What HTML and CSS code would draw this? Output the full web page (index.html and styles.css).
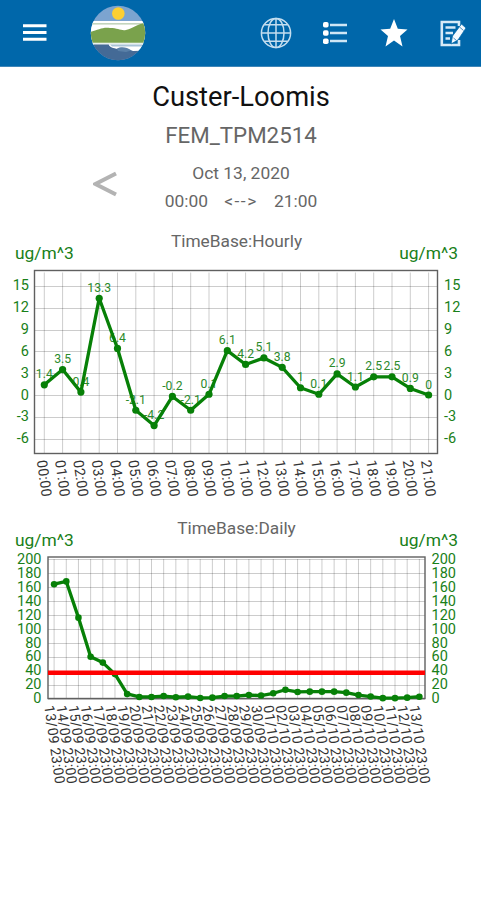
FILE: index.html
```html
<!DOCTYPE html>
<html lang="en">
<head>
<meta charset="utf-8">
<title>Custer-Loomis</title>
<link rel="stylesheet" href="styles.css">
</head>
<body>
<header class="bar">
  <svg class="menu" viewBox="0 0 24 18"><path d="M0 1.7H23.5M0 8.5H23.5M0 15.2H23.5"/></svg>
  <svg class="logo" viewBox="0 0 56 56">
    <clipPath id="disc"><circle cx="28" cy="28" r="27.2"/></clipPath>
    <g clip-path="url(#disc)">
      <rect width="56" height="56" fill="#7ca4d0"/>
      <circle cx="28.3" cy="8.5" r="6.3" fill="#fdcf32"/>
      <rect y="16" width="56" height="24" fill="#fff"/>
      <rect y="18" width="56" height="1.6" fill="#c3d5bd"/>
      <path d="M0 27C9 25 12 22 20 23C28 23 31 26 36 25C44 23 46 19 56 18V37.8H0Z" fill="#7aa24c"/>
      <rect y="38" width="56" height="2" fill="#e8f1ee"/>
      <path d="M0 39.6H19C21 43 24 43 29 43C35 43 38 45 43 45.6L56 45V56H0Z" fill="#446a96"/>
      <path d="M18.5 39.5H56V45.5L43 46C37 43 34 42.5 28 44C23 43 20 42.5 18.5 39.5Z" fill="#fff"/>
      <path d="M20 39.6H56V41.6H22Z" fill="#a9c3d8"/>
      <path d="M27 43.5C31 41.5 37 41.8 41 45.5L36 47L28 46Z" fill="#5a80a8"/>
    </g>
  </svg>
  <nav class="actions">
    <svg class="globe" viewBox="0 0 32 32"><circle cx="16" cy="16" r="14.6"/><ellipse cx="16" cy="16" rx="8" ry="14.6"/><path d="M16 1.4V30.6M1.4 16H30.6M4.2 7.8H27.8M4.2 24.2H27.8"/></svg>
    <svg class="list" viewBox="0 0 26 24"><path d="M8 4H25M8 12H25M8 20H25"/><rect x="1" y="1" width="5.6" height="5.6" rx="1.8"/><rect x="1" y="9.2" width="5.6" height="5.6" rx="1.8"/><rect x="1" y="17.4" width="5.6" height="5.6" rx="1.8"/></svg>
    <svg class="star" viewBox="0 0 28 28"><path d="M14 0L17.8 9.8L27.5 10.5L20 17L22.5 27.5L14 21.6L5.5 27.5L8 17L.5 10.5L10.2 9.8Z"/></svg>
    <svg class="note" viewBox="0 0 26 27"><path class="sheet" d="M19 6V2H1.8V25H19V20"/><path class="sheet" d="M5.5 7.5H15.5M5.5 13H13M5.5 18.5H10"/><path class="pen" d="M21.5 4L26 8L18 20L11 24L12.5 16Z"/><path class="nib" d="M13.5 18L16.5 20.5M19.5 7L23.5 10.5"/></svg>
  </nav>
</header>
<main>
  <section class="station">
    <h1>Custer-Loomis</h1>
    <h2>FEM_TPM2514</h2>
    <div class="period">
      <svg class="prev" viewBox="0 0 24 26"><path d="M23 2.5L2.5 13L23 23.5"/></svg>
      <div class="dates">
        <p>Oct 13, 2020</p>
        <p class="range"><span>00:00</span><span class="arrow">&lt;--&gt;</span><span>21:00</span></p>
      </div>
    </div>
  </section>
  <section class="panel">
    <h3>TimeBase:Hourly</h3>
    <div class="units"><span>ug/m^3</span><span>ug/m^3</span></div>
    <svg class="chart hourly" id="hourly" viewBox="0 264 482 240"></svg>
  </section>
  <section class="panel">
    <h3 class="daily-title">TimeBase:Daily</h3>
    <div class="units"><span>ug/m^3</span><span>ug/m^3</span></div>
    <svg class="chart daily" id="daily" viewBox="0 551 482 249"></svg>
  </section>
</main>
<script src="charts.js"></script>
</body>
</html>
```
FILE: styles.css
```css
* { box-sizing: border-box; }
body { margin: 0; background: #fff; color: #666; font-family: Roboto, sans-serif; }
h1, h2, h3, p { margin: 0; font-weight: 400; }
svg { display: block; flex: none; }
.bar { display: flex; align-items: center; width: 481px; height: 67px; padding: 0 15px 0 23px; background: #0067aa; border-bottom: 1px solid #3f86b8; }
.menu { width: 24px; height: 18px; margin-top: -1px; fill: none; stroke: #fff; stroke-width: 3; }
.logo { width: 56px; height: 56px; margin-left: 43px; }
.actions { display: flex; align-items: center; margin-left: auto; }
.globe { width: 32px; height: 32px; margin-right: 30px; fill: none; stroke: #c4deef; stroke-width: 1.5; }
.list { width: 26px; height: 24px; margin-right: 32px; fill: #fff; stroke: #cfe6f5; stroke-width: 2.4; }
.list rect { stroke: none; }
.star { width: 28px; height: 28px; margin-right: 32px; fill: #fff; }
.note { width: 26px; height: 27px; fill: none; }
.sheet { stroke: #d6eaf7; stroke-width: 2.6; }
.pen { fill: #f4faff; stroke: #0067aa; stroke-width: .8; }
.nib { stroke: #4c93c3; stroke-width: 1; }
.station { height: 163px; padding-top: 13px; text-align: center; }
h1 { height: 34px; font-size: 27.3px; line-height: 34px; color: #111; }
h2 { height: 30px; margin-top: 6px; font-size: 22.3px; line-height: 30px; color: #666; }
.period { display: flex; align-items: flex-start; padding-left: 93px; }
.prev { width: 24px; height: 26px; margin-top: 21px; fill: none; stroke: #b3b3b3; stroke-width: 4; }
.dates { width: 248px; font-size: 17.4px; line-height: 28px; padding-top: 9px; }
.range { display: flex; justify-content: center; gap: 16px; }
.arrow { width: 34px; letter-spacing: 1.5px; white-space: nowrap; }
.panel { height: 287px; }
h3 { height: 20px; padding: 1px 9px 0 0; font-size: 17.3px; line-height: 20px; text-align: center; }
.units { display: flex; justify-content: space-between; height: 14px; margin-top: -4px; padding: 0 24px 0 15px; font-size: 17.4px; line-height: 14px; color: #198019; }
.chart { width: 482px; }
.hourly { height: 240px; margin-top: 4px; }
.daily { height: 249px; margin-top: 4px; }
.frame { fill: none; stroke: #606060; stroke-width: 1.4; }
.grid { fill: none; stroke: #000; stroke-opacity: .2; stroke-width: 1; }
.line { fill: none; stroke: #078007; stroke-width: 3.3; stroke-linejoin: round; }
.dot { fill: #078007; }
.limit { stroke: #f00; stroke-width: 4.6; }
.tick { font-size: 14.5px; fill: #198019; }
.value { font-size: 12.2px; fill: #2b8a2b; text-anchor: middle; }
.time { font-size: 14.3px; fill: #333; text-anchor: middle; }
.daily .time { font-size: 14px; }
```
FILE: charts.js
```js
const NS = 'http://www.w3.org/2000/svg';

function add(svg, tag, cls, attrs, text) {
  const el = document.createElementNS(NS, tag);
  el.setAttribute('class', cls);
  for (const key in attrs) el.setAttribute(key, attrs[key]);
  if (text !== undefined) el.textContent = text;
  svg.appendChild(el);
}

function draw(c) {
  const svg = document.getElementById(c.id);
  const px = i => c.x0 + i * c.dx;
  const py = v => c.zero - v * c.unit;
  let grid = '';
  c.data.forEach((v, i) => { grid += `M${px(i)} ${c.top + 2}V${c.bottom}`; });
  c.ticks.forEach(v => {
    grid += `M${c.left} ${Math.round(py(v)) + .5}H${c.right}`;
    const y = py(v) + c.tickShift;
    add(svg, 'text', 'tick', { x: c.left + c.leftLabel, y, 'text-anchor': 'end' }, v);
    add(svg, 'text', 'tick', { x: c.right + 6.5, y }, v);
  });
  add(svg, 'path', 'grid', { d: grid });
  add(svg, 'rect', 'frame', { x: c.left, y: c.top, width: c.right - c.left, height: c.bottom - c.top });
  if (c.values) c.data.forEach((v, i) => add(svg, 'text', 'value', { x: px(i), y: py(v) - 6.5 }, v));
  add(svg, 'polyline', 'line', { points: c.data.map((v, i) => px(i) + ',' + py(v)).join(' ') });
  c.data.forEach((v, i) => add(svg, 'circle', 'dot', { cx: px(i), cy: py(v), r: c.radius }));
  if (c.limit) add(svg, 'line', 'limit', { x1: c.left, x2: c.right, y1: py(c.limit), y2: py(c.limit) });
  c.labels.forEach((t, i) => add(svg, 'text', 'time', {
    transform: `translate(${px(i) + c.labelX} ${c.labelY}) rotate(82)`, y: 5,
    textLength: c.labelLength
  }, t));
}

const pad = n => String(n).padStart(2, '0');

draw({
  id: 'hourly', left: 34.5, right: 437.5, top: 270.5, bottom: 453.5,
  x0: 44.3, dx: 18.3, zero: 395, unit: 7.27, ticks: [15, 12, 9, 6, 3, 0, -3, -6],
  tickShift: 4.5, leftLabel: -5.5, radius: 3.6, values: true,
  data: [1.4, 3.5, 0.4, 13.3, 6.4, -2.1, -4.2, -0.2, -2.1, 0.1, 6.1, 4.2, 5.1, 3.8, 1, 0.1, 2.9, 1.1, 2.5, 2.5, 0.9, 0],
  labels: Array.from({ length: 22 }, (_, i) => pad(i) + ':00'), labelX: 0, labelY: 478.3, labelLength: 37
});

draw({
  id: 'daily', left: 48, right: 425, top: 557, bottom: 698.5,
  x0: 54.1, dx: 12.175, zero: 698.5, unit: 0.697,
  ticks: [200, 180, 160, 140, 120, 100, 80, 60, 40, 20, 0],
  tickShift: 4.8, leftLabel: -6.5, radius: 3.3, limit: 37,
  data: [164, 168, 116, 60, 51.5, 35, 6.5, 2.2, 2.2, 3.5, 1.8, 2.7, 0.8, 1.2, 3.5, 3.5, 5, 4.2, 7.5, 12.5, 9.4, 9.8, 9.8, 9.8, 8.4, 5, 2.8, 0.5, 0.5, 1.2, 2.6],
  labels: Array.from({ length: 31 }, (_, i) => (i < 18 ? (i + 13) + '/09' : pad(i - 17) + '/10') + ' 23:00'),
  labelX: 0.6, labelY: 744.5, labelLength: 79
});
```
